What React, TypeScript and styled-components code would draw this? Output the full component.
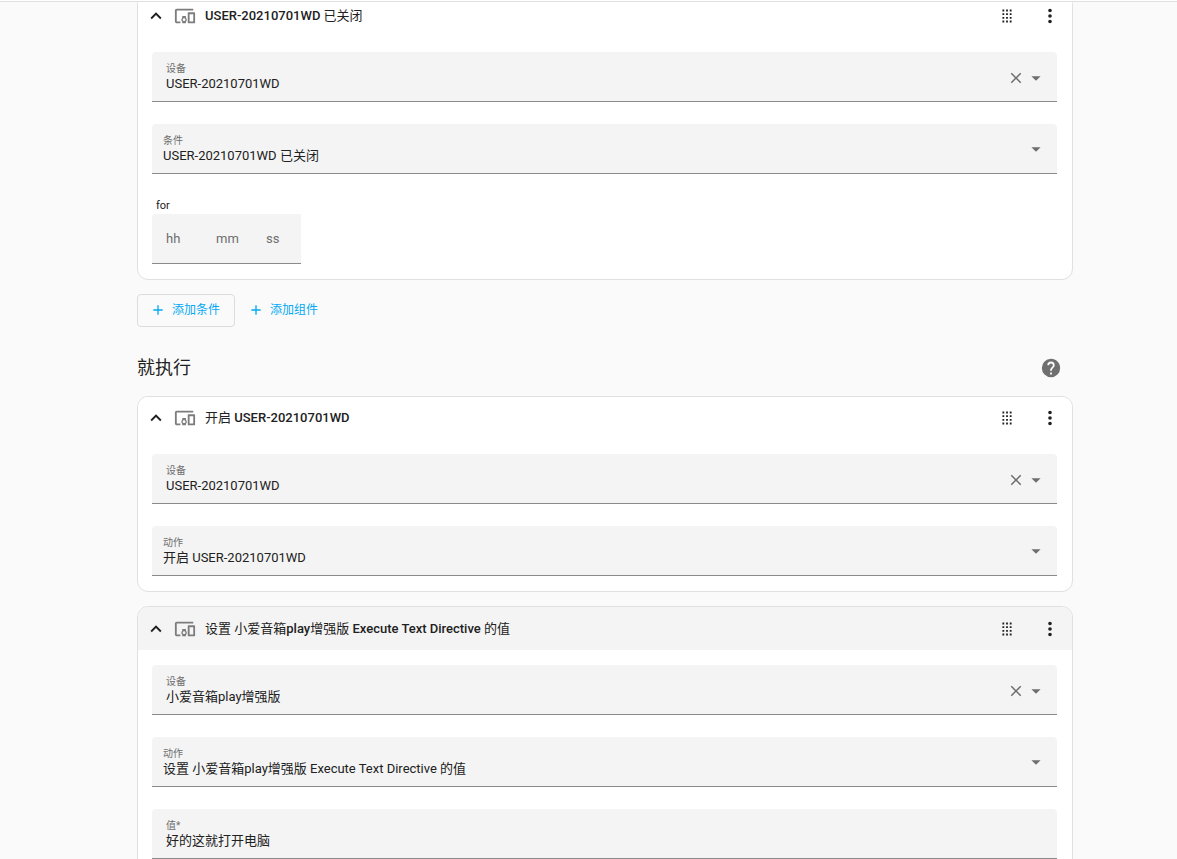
import React, { useId, useState } from "react";
import styled, { createGlobalStyle } from "styled-components";

const GlobalStyle = createGlobalStyle`
  *, *::before, *::after { box-sizing: border-box; }
  body {
    margin: 0;
    background: #fafafa;
    color: #212121;
    font-family: Roboto, "Noto Sans CJK SC", sans-serif;
    font-size: 13px;
  }
  button, input, select { font: inherit; color: inherit; margin: 0; }
`;

const paths = {
  chevronUp: "M7.41,15.41L12,10.83L16.59,15.41L18,14L12,8L6,14L7.41,15.41Z",
  devices:
    "M3 6H21V4H3C1.9 4 1 4.9 1 6V18C1 19.1 1.9 20 3 20H7V18H3V6M13 12H9V13.78C8.39 14.33 8 15.11 8 16C8 16.89 8.39 17.67 9 18.22V20H13V18.22C13.61 17.67 14 16.88 14 16S13.61 14.33 13 13.78V12M11 17.5C10.17 17.5 9.5 16.83 9.5 16S10.17 14.5 11 14.5 12.5 15.17 12.5 16 11.83 17.5 11 17.5M22 8H16C15.5 8 15 8.5 15 9V19C15 19.5 15.5 20 16 20H22C22.5 20 23 19.5 23 19V9C23 8.5 22.5 8 22 8M21 18H17V10H21V18Z",
  drag: "M7,19V17H9V19H7M11,19V17H13V19H11M15,19V17H17V19H15M7,15V13H9V15H7M11,15V13H13V15H11M15,15V13H17V15H15M7,11V9H9V11H7M11,11V9H13V11H11M15,11V9H17V11H15M7,7V5H9V7H7M11,7V5H13V7H11M15,7V5H17V7H15Z",
  dots: "M12,16A2,2 0 0,1 14,18A2,2 0 0,1 12,20A2,2 0 0,1 10,18A2,2 0 0,1 12,16M12,10A2,2 0 0,1 14,12A2,2 0 0,1 12,14A2,2 0 0,1 10,12A2,2 0 0,1 12,10M12,4A2,2 0 0,1 14,6A2,2 0 0,1 12,8A2,2 0 0,1 10,6A2,2 0 0,1 12,4Z",
  close:
    "M19,6.41L17.59,5L12,10.59L6.41,5L5,6.41L10.59,12L5,17.59L6.41,19L12,13.41L17.59,19L19,17.59L13.41,12L19,6.41Z",
  menuDown: "M7,10L12,15L17,10H7Z",
  plus: "M19,13H13V19H11V13H5V11H11V5H13V11H19V13Z",
  help: "M15.07,11.25L14.17,12.17C13.45,12.89 13,13.5 13,15H11V14.5C11,13.39 11.45,12.39 12.17,11.67L13.41,10.41C13.78,10.05 14,9.55 14,9C14,7.89 13.1,7 12,7A2,2 0 0,0 10,9H8A4,4 0 0,1 12,5A4,4 0 0,1 16,9C16,9.88 15.64,10.67 15.07,11.25M13,19H11V17H13M12,2A10,10 0 0,0 2,12A10,10 0 0,0 12,22A10,10 0 0,0 22,12C22,6.47 17.5,2 12,2Z",
};

const Svg = styled.svg<{ $size: number }>`
  display: block;
  flex: none;
  width: ${(p) => p.$size}px;
  height: ${(p) => p.$size}px;
  fill: currentColor;
`;

function Icon({ name, size = 22 }: { name: keyof typeof paths; size?: number }) {
  return (
    <Svg $size={size} viewBox="0 0 24 24" aria-hidden="true">
      <path d={paths[name]} />
    </Svg>
  );
}

const Shell = styled.div`
  display: flex;
  flex-direction: column;
  height: 100vh;
`;

const TopBar = styled.header`
  flex: none;
  height: 2px;
  background: #fff;
  border-bottom: 1px solid #e0e0e0;
`;

const Scroller = styled.div`
  flex: 1;
  min-height: 0;
  overflow: hidden;
  padding-left: 33px;
`;

/* The list is scrolled slightly past the top edge of its first card. */
const Column = styled.main`
  max-width: 936px;
  margin: -8px auto 0;
`;

const Card = styled.section`
  background: #fff;
  border: 1px solid #e0e0e0;
  border-radius: 11px;
  overflow: hidden;
  margin-bottom: 14px;
`;

const CardHeader = styled.div<{ $active?: boolean }>`
  display: flex;
  align-items: center;
  height: ${(p) => (p.$active ? 43 : 42)}px;
  padding-right: 1px;
  background: ${(p) => (p.$active ? "#f4f4f4" : "#fff")};
`;

const Expander = styled.button`
  display: flex;
  align-items: center;
  flex: 1;
  min-width: 0;
  height: 100%;
  padding: 0 7px;
  gap: 7px;
  border: 0;
  background: none;
  text-align: left;
  cursor: pointer;
`;

const DeviceMark = styled.span`
  color: #7c7c7c;
`;

const CardTitle = styled.span`
  padding-left: 2px;
  font-weight: 500;
  line-height: 20px;
  white-space: nowrap;
`;

const Han = styled.span`
  font-weight: 400;
`;

const IconButton = styled.button<{ $muted?: boolean }>`
  display: grid;
  place-items: center;
  flex: none;
  width: 43px;
  height: ${(p) => (p.$muted ? "43px" : "100%")};
  padding: 0;
  border: 0;
  background: none;
  color: ${(p) => (p.$muted ? "#6f6f6f" : "#212121")};
  cursor: pointer;
`;

const CardBody = styled.div`
  display: flex;
  flex-direction: column;
  gap: 22px;
  padding: 15px 15px 15px 14px;
`;

const Field = styled.div<{ $inset: number }>`
  display: flex;
  align-items: center;
  height: 50px;
  padding: 0 10px 0 ${(p) => p.$inset}px;
  background: #f4f4f4;
  border-bottom: 1px solid #8a8a8a;
  border-radius: 4px 4px 0 0;
`;

const FieldText = styled.div`
  display: flex;
  flex-direction: column;
  flex: 1;
  min-width: 0;
  height: 100%;
  padding-top: 11px;
`;

const FieldLabel = styled.label`
  font-size: 10px;
  line-height: 12px;
  color: #6e6e6e;
`;

const TextInput = styled.input`
  width: 100%;
  height: 18px;
  padding: 0;
  border: 0;
  outline: 0;
  background: none;
  line-height: 18px;
`;

const SelectInput = styled.select`
  width: 100%;
  height: 18px;
  padding: 0;
  border: 0;
  outline: 0;
  appearance: none;
  background: none;
  line-height: 18px;
`;

const FieldButton = styled.button`
  display: block;
  padding: 3px 0 0;
  border: 0;
  background: none;
  color: #6e6e6e;
  cursor: pointer;
`;

const SelectArrow = styled.span`
  color: #6e6e6e;
  pointer-events: none;
`;

const Duration = styled.fieldset`
  min-width: 0;
  margin: 0;
  padding: 0;
  border: 0;
`;

const DurationLabel = styled.legend`
  padding: 2px 4px 0;
  font-size: 11px;
  line-height: 16px;
`;

const DurationBox = styled.div`
  display: flex;
  align-items: center;
  width: 149px;
  height: 50px;
  padding-left: 14px;
  background: #f4f4f4;
  border-bottom: 1px solid #8a8a8a;
  border-radius: 4px 0 0 0;
`;

const DurationInput = styled.input`
  flex: 0 0 50px;
  min-width: 0;
  height: 20px;
  padding: 0;
  border: 0;
  outline: 0;
  background: none;
  &:last-child { flex: 1; }
  &::placeholder { color: #6e6e6e; opacity: 1; }
`;

const Actions = styled.div`
  display: flex;
`;

const AddButton = styled.button<{ $outlined?: boolean }>`
  display: flex;
  align-items: center;
  gap: 6px;
  height: 33px;
  padding: 0 14px 2px 12px;
  border: 1px solid ${(p) => (p.$outlined ? "#dcdcdc" : "transparent")};
  border-radius: 4px;
  background: none;
  color: #03a9f4;
  font-size: 12px;
  line-height: 20px;
  cursor: pointer;
`;

const SectionHeader = styled.div`
  display: flex;
  align-items: center;
  justify-content: space-between;
  margin: 19px 0 7px;
  padding-right: 1px;
`;

const SectionTitle = styled.h2`
  margin: 0;
  font-size: 18px;
  font-weight: 400;
  line-height: 24px;
`;

function DeviceField({ value }: { value: string }) {
  const id = useId();
  const [text, setText] = useState(value);
  return (
    <Field $inset={14}>
      <FieldText>
        <FieldLabel htmlFor={id}>设备</FieldLabel>
        <TextInput id={id} value={text} onChange={(e) => setText(e.target.value)} />
      </FieldText>
      <FieldButton type="button" aria-label="清除" onClick={() => setText("")}>
        <Icon name="close" size={18} />
      </FieldButton>
      <FieldButton type="button" aria-label="展开">
        <Icon name="menuDown" />
      </FieldButton>
    </Field>
  );
}

function SelectField({ label, value }: { label: string; value: string }) {
  const id = useId();
  return (
    <Field $inset={11}>
      <FieldText>
        <FieldLabel htmlFor={id}>{label}</FieldLabel>
        <SelectInput id={id} defaultValue={value}>
          <option>{value}</option>
        </SelectInput>
      </FieldText>
      <SelectArrow>
        <Icon name="menuDown" />
      </SelectArrow>
    </Field>
  );
}

function ValueField({ label, value }: { label: string; value: string }) {
  const id = useId();
  return (
    <Field $inset={14}>
      <FieldText>
        <FieldLabel htmlFor={id}>{label}</FieldLabel>
        <TextInput id={id} defaultValue={value} required />
      </FieldText>
    </Field>
  );
}

function DurationField() {
  return (
    <Duration>
      <DurationLabel>for</DurationLabel>
      <DurationBox>
        <DurationInput aria-label="hh" placeholder="hh" />
        <DurationInput aria-label="mm" placeholder="mm" />
        <DurationInput aria-label="ss" placeholder="ss" />
      </DurationBox>
    </Duration>
  );
}

/* Latin words are set in medium, Chinese words stay regular. */
function MixedText({ text }: { text: string }) {
  return (
    <>
      {text
        .split(/([\u4e00-\u9fff]+)/)
        .map((part, i) => (i % 2 === 1 ? <Han key={i}>{part}</Han> : part))}
    </>
  );
}

function RuleCard({
  title,
  active,
  children,
}: {
  title: string;
  active?: boolean;
  children: React.ReactNode;
}) {
  return (
    <Card>
      <CardHeader $active={active}>
        <Expander type="button" aria-expanded="true">
          <Icon name="chevronUp" />
          <DeviceMark>
            <Icon name="devices" />
          </DeviceMark>
          <CardTitle>
            <MixedText text={title} />
          </CardTitle>
        </Expander>
        <IconButton type="button" aria-label="移动">
          <Icon name="drag" />
        </IconButton>
        <IconButton type="button" aria-label="菜单">
          <Icon name="dots" />
        </IconButton>
      </CardHeader>
      <CardBody>{children}</CardBody>
    </Card>
  );
}

export default function App() {
  return (
    <Shell>
      <GlobalStyle />
      <TopBar />
      <Scroller>
        <Column>
          <RuleCard title="USER-20210701WD 已关闭">
            <DeviceField value="USER-20210701WD" />
            <SelectField label="条件" value="USER-20210701WD 已关闭" />
            <DurationField />
          </RuleCard>

          <Actions>
            <AddButton type="button" $outlined>
              <Icon name="plus" size={16} />
              添加条件
            </AddButton>
            <AddButton type="button">
              <Icon name="plus" size={16} />
              添加组件
            </AddButton>
          </Actions>

          <SectionHeader>
            <SectionTitle>就执行</SectionTitle>
            <IconButton type="button" aria-label="帮助" $muted>
              <Icon name="help" />
            </IconButton>
          </SectionHeader>

          <RuleCard title="开启 USER-20210701WD">
            <DeviceField value="USER-20210701WD" />
            <SelectField label="动作" value="开启 USER-20210701WD" />
          </RuleCard>

          <RuleCard title="设置 小爱音箱play增强版 Execute Text Directive 的值" active>
            <DeviceField value="小爱音箱play增强版" />
            <SelectField label="动作" value="设置 小爱音箱play增强版 Execute Text Directive 的值" />
            <ValueField label="值*" value="好的这就打开电脑" />
          </RuleCard>
        </Column>
      </Scroller>
    </Shell>
  );
}
